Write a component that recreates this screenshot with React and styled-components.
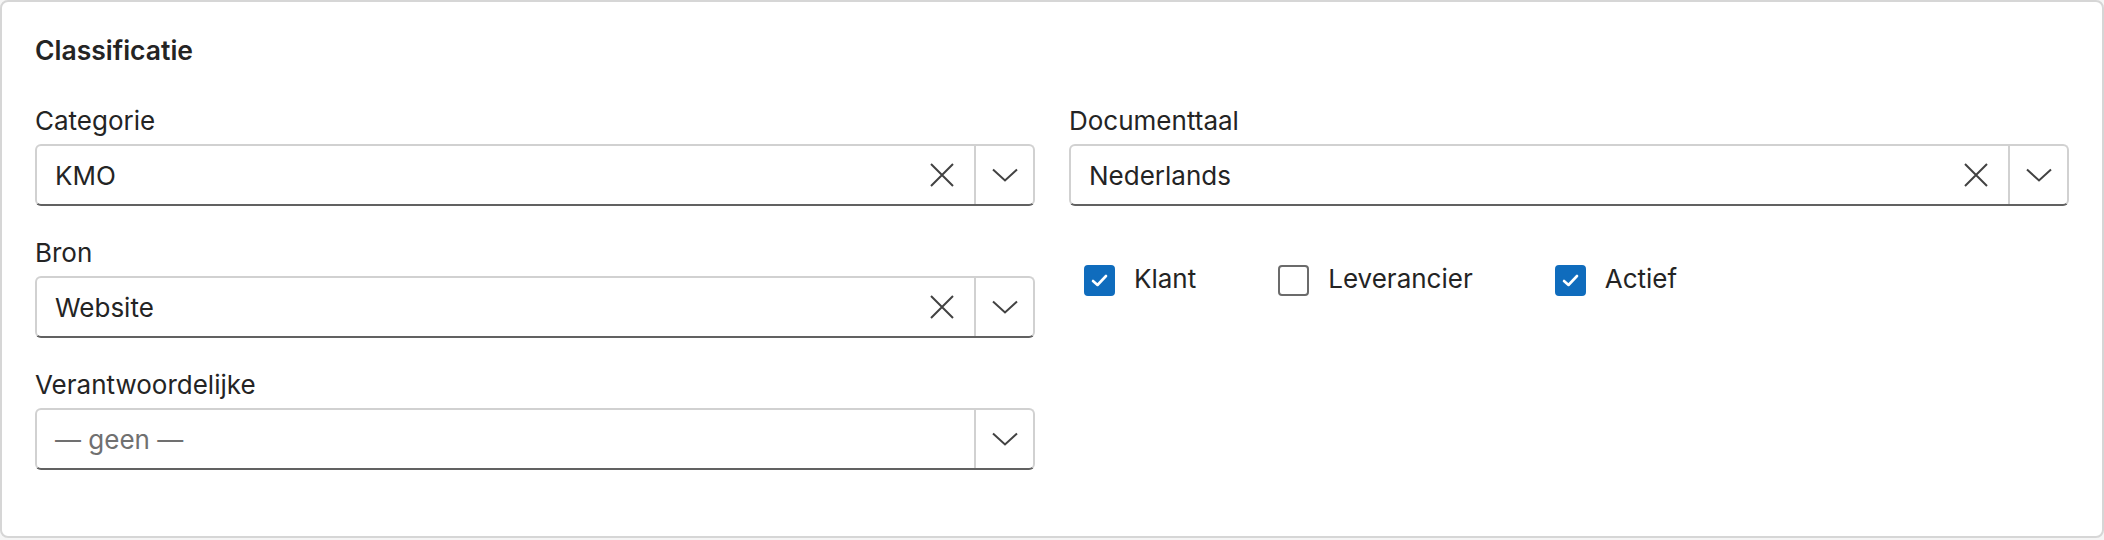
import React from 'react'
import styled, { createGlobalStyle } from 'styled-components'

const GlobalStyle = createGlobalStyle`
  html, body {
    margin: 0;
    padding: 0;
    background: #f5f5f5;
  }
  body {
    font-family: Inter, "Noto Sans", "Liberation Sans", sans-serif;
    color: #242424;
  }
`

const Card = styled.section`
  box-sizing: border-box;
  width: 2104px;
  height: 538px;
  background: #ffffff;
  border: 2px solid #d6d6d6;
  border-radius: 8px;
  padding: 31px 33px 0;
`

const Title = styled.h2`
  margin: 0 0 37px;
  font-size: 26.5px;
  line-height: 34px;
  font-weight: 600;
`

const Columns = styled.div`
  display: grid;
  grid-template-columns: 1000px 1000px;
  column-gap: 34px;
  align-items: start;
`

const Column = styled.div`
  display: flex;
  flex-direction: column;
  gap: 30px;
`

const Field = styled.div`
  display: flex;
  flex-direction: column;
  gap: 6px;
`

const Label = styled.label`
  font-size: 26px;
  line-height: 34px;
`

const Combo = styled.div`
  box-sizing: border-box;
  display: flex;
  align-items: stretch;
  height: 62px;
  background: #ffffff;
  border: 2px solid #d1d1d1;
  border-bottom-color: #616161;
  border-radius: 6px;
`

const Value = styled.div`
  flex: 1;
  display: flex;
  align-items: center;
  padding-left: 18px;
  font-size: 26px;
  color: ${p => (p.placeholder ? '#707070' : '#242424')};
`

const IconButton = styled.button`
  display: flex;
  align-items: center;
  justify-content: center;
  padding: 0;
  border: none;
  background: none;
  color: #424242;
  cursor: pointer;
`

const ClearButton = styled(IconButton)`
  width: 44px;
  margin-right: 10px;
`

const ExpandButton = styled(IconButton)`
  width: 59px;
  border-left: 2px solid #d1d1d1;
`

const CheckRow = styled.div`
  display: flex;
  align-items: center;
  gap: 82px;
  margin-top: 25px;
  padding-left: 15px;
`

const Check = styled.label`
  display: flex;
  align-items: center;
  gap: 19px;
  font-size: 26px;
  line-height: 34px;
  cursor: pointer;
`

const Box = styled.span`
  box-sizing: border-box;
  display: flex;
  align-items: center;
  justify-content: center;
  width: 31px;
  height: 31px;
  margin-top: 4px;
  border-radius: 4px;
  background: ${p => (p.checked ? '#0f6cbd' : '#ffffff')};
  border: 2px solid ${p => (p.checked ? '#0f6cbd' : '#6b6b6b')};
`

const ClearIcon = () => (
  <svg width="26" height="26" viewBox="0 0 26 26" fill="none" stroke="currentColor" strokeWidth="2">
    <path d="M2 2 L24 24 M24 2 L2 24" />
  </svg>
)

const ChevronIcon = () => (
  <svg width="26" height="14" viewBox="0 0 26 14" fill="none" stroke="currentColor" strokeWidth="2">
    <path d="M1 1.5 L13 12.5 L25 1.5" />
  </svg>
)

const CheckMark = () => (
  <svg width="17" height="13" viewBox="0 0 17 13" fill="none" stroke="#ffffff" strokeWidth="2.6" strokeLinecap="round" strokeLinejoin="round">
    <path d="M2 7 L6.5 11 L15 2" />
  </svg>
)

const ComboField = ({ label, value, placeholder, clearable = true }) => (
  <Field>
    <Label>{label}</Label>
    <Combo>
      <Value placeholder={!value ? 1 : 0}>{value || placeholder}</Value>
      {clearable && value && (
        <ClearButton aria-label="Wissen">
          <ClearIcon />
        </ClearButton>
      )}
      <ExpandButton aria-label="Openen">
        <ChevronIcon />
      </ExpandButton>
    </Combo>
  </Field>
)

const Checkbox = ({ label, checked }) => (
  <Check>
    <Box checked={checked}>{checked && <CheckMark />}</Box>
    {label}
  </Check>
)

export default function App() {
  return (
    <>
      <GlobalStyle />
      <Card>
        <Title>Classificatie</Title>
        <Columns>
          <Column>
            <ComboField label="Categorie" value="KMO" />
            <ComboField label="Bron" value="Website" />
            <ComboField label="Verantwoordelijke" placeholder="— geen —" />
          </Column>
          <Column>
            <ComboField label="Documenttaal" value="Nederlands" />
            <CheckRow>
              <Checkbox label="Klant" checked />
              <Checkbox label="Leverancier" />
              <Checkbox label="Actief" checked />
            </CheckRow>
          </Column>
        </Columns>
      </Card>
    </>
  )
}
